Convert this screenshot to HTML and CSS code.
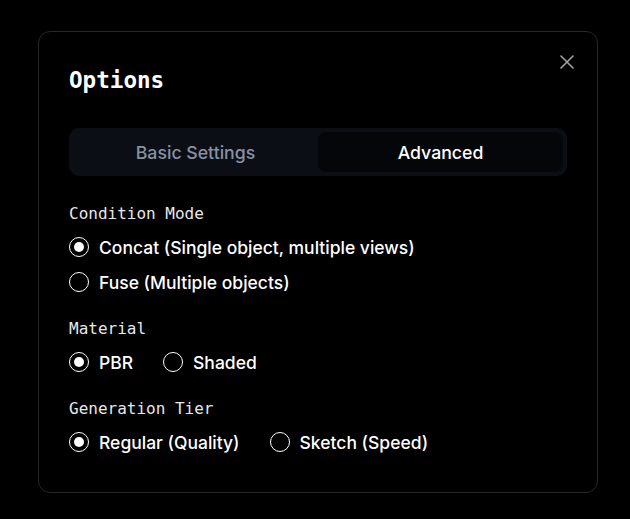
FILE: index.html
```html
<!DOCTYPE html>
<html>
<head>
<meta charset="utf-8">
<link rel="stylesheet" href="styles.css">
</head>
<body>
<div class="modal">
  <button class="close" aria-label="Close">
    <svg width="16" height="16" viewBox="0 0 16 16"><path d="M2 2 L14 14 M14 2 L2 14" stroke="#a3a3a3" stroke-width="1.6" stroke-linecap="round"/></svg>
  </button>
  <h2 class="title">Options</h2>
  <div class="tabs">
    <div class="tab">Basic Settings</div>
    <div class="tab active">Advanced</div>
  </div>
  <div class="group first">
    <div class="label">Condition Mode</div>
    <div class="options column">
      <div class="radio"><span class="dot checked"></span>Concat (Single object, multiple views)</div>
      <div class="radio"><span class="dot"></span>Fuse (Multiple objects)</div>
    </div>
  </div>
  <div class="group">
    <div class="label">Material</div>
    <div class="options row">
      <div class="radio"><span class="dot checked"></span>PBR</div>
      <div class="radio"><span class="dot"></span>Shaded</div>
    </div>
  </div>
  <div class="group">
    <div class="label">Generation Tier</div>
    <div class="options row">
      <div class="radio"><span class="dot checked"></span>Regular (Quality)</div>
      <div class="radio"><span class="dot"></span>Sketch (Speed)</div>
    </div>
  </div>
</div>
</body>
</html>
```

FILE: styles.css
```css
html, body {
  margin: 0;
  padding: 0;
  background: #000;
  height: 100%;
}
body {
  padding-top: 31px;
  padding-left: 38px;
  box-sizing: border-box;
  font-family: Inter, "Noto Sans", sans-serif;
  color: #fff;
}
.modal {
  position: relative;
  width: 560px;
  height: 462px;
  box-sizing: border-box;
  border: 1px solid #272727;
  border-radius: 12px;
  background: #000;
  padding: 34px 30px 30px 30px;
}
.close {
  position: absolute;
  top: 22px;
  right: 22px;
  width: 16px;
  height: 16px;
  padding: 0;
  border: 0;
  background: transparent;
  display: flex;
}
.title {
  margin: 0;
  font-family: "DejaVu Sans Mono", monospace;
  font-weight: bold;
  font-size: 22.6px;
  line-height: 28px;
}
.tabs {
  margin-top: 34px;
  display: grid;
  grid-template-columns: 1fr 1fr;
  padding: 4px;
  background: #0b0e15;
  border-radius: 10px;
}
.tab {
  height: 40px;
  display: flex;
  align-items: center;
  justify-content: center;
  font-size: 17.7px;
  font-weight: 500;
  color: #8891a2;
  border-radius: 8px;
}
.tab.active {
  background: #040609;
  color: #fff;
}
.group {
  margin-top: 23px;
}
.group.first {
  margin-top: 26px;
}
.label {
  font-family: "DejaVu Sans Mono", monospace;
  font-size: 16px;
  line-height: 24px;
  color: #e8e8e8;
}
.options {
  margin-top: 9px;
  display: flex;
}
.options.column {
  flex-direction: column;
  gap: 11px;
}
.options.row {
  gap: 30px;
}
.radio {
  display: flex;
  align-items: center;
  gap: 10px;
  height: 24px;
  font-size: 17.5px;
  font-weight: 500;
  color: #fff;
}
.dot {
  width: 20px;
  height: 20px;
  box-sizing: border-box;
  border: 1.6px solid #fff;
  border-radius: 50%;
  display: flex;
  align-items: center;
  justify-content: center;
}
.dot.checked::after {
  content: "";
  width: 10px;
  height: 10px;
  border-radius: 50%;
  background: #fff;
}
```
